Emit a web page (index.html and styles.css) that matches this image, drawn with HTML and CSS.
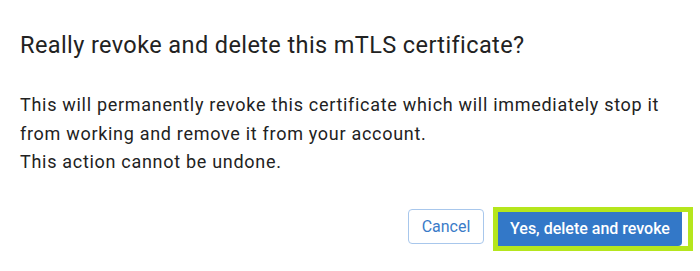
FILE: index.html
```html
<!DOCTYPE html>
<html>
<head>
<meta charset="utf-8">
<link rel="stylesheet" href="styles.css">
</head>
<body>
<div class="dialog">
  <h2 class="title">Really revoke and delete this mTLS certificate?</h2>
  <p class="message">This will permanently revoke this certificate which will immediately stop it from working and remove it from your account.<br>This action cannot be undone.</p>
  <div class="actions">
    <button class="btn btn-cancel">Cancel</button>
    <div class="highlight">
      <button class="btn btn-primary">Yes, delete and revoke</button>
    </div>
  </div>
</div>
</body>
</html>
```
FILE: styles.css
```css
html, body {
  margin: 0;
  padding: 0;
  background: #ffffff;
}
.dialog {
  font-family: Roboto, "Liberation Sans", sans-serif;
  color: #222222;
  padding: 32px 20px 0 20px;
  width: 700px;
  box-sizing: border-box;
}
.title {
  margin: 0;
  font-size: 23.5px;
  font-weight: 400;
  line-height: 26px;
  letter-spacing: 0.4px;
  color: #222222;
}
.message {
  margin: 33px 0 0 0;
  font-size: 18px;
  line-height: 28.5px;
  letter-spacing: 0.7px;
  max-width: 660px;
}
.actions {
  display: flex;
  justify-content: flex-end;
  align-items: flex-start;
  margin-top: 30px;
  padding-right: 7px;
  margin-right: -20px;
  gap: 9px;
}
.btn {
  font-family: Roboto, "Liberation Sans", sans-serif;
  font-size: 16px;
  cursor: pointer;
}
.btn-cancel {
  margin-top: 2px;
  width: 76px;
  height: 35px;
  background: #ffffff;
  border: 1px solid #a8c7ec;
  border-radius: 4px;
  color: #3a7bc8;
  padding: 0;
}
.highlight {
  border: 5px solid #b5e61d;
  background: #ffffff;
  width: 190px;
  height: 34px;
  display: flex;
}
.btn-primary {
  width: 184px;
  height: 34px;
  background: #3378c8;
  color: #ffffff;
  border: none;
  border-radius: 0 0 4px 0;
  padding: 0;
  font-weight: 500;
}
```
